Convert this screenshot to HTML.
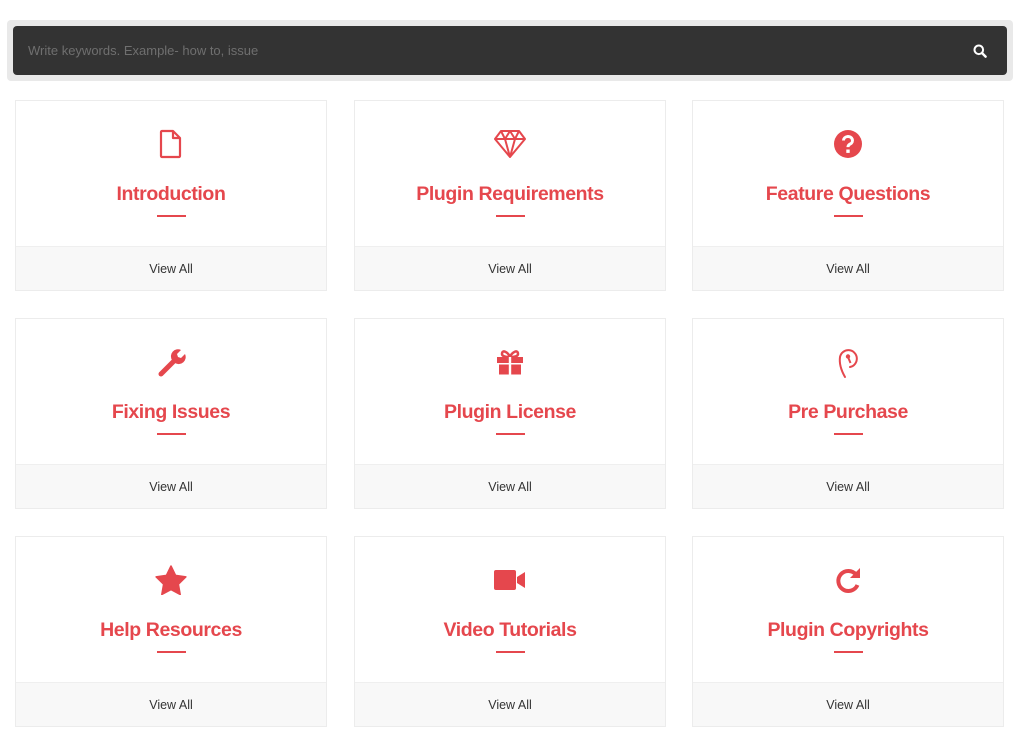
<!DOCTYPE html>
<html><head><meta charset="utf-8"><style>
*{margin:0;padding:0;box-sizing:border-box}
body{width:1024px;height:750px;background:#fff;font-family:"Liberation Sans",sans-serif;position:relative;overflow:hidden}
.sw{position:absolute;left:7px;top:20px;width:1006px;height:61px;background:#e9e9e9;border-radius:4px}
.sb{position:absolute;left:13px;top:26px;width:994px;height:49px;background:#333;border-radius:4px}
.sb span{position:absolute;left:15px;top:17px;font-size:13px;color:#6f6f6f}
.sb svg{position:absolute;right:20px;top:18px}
.c{position:absolute;width:312px;height:191px;border:1px solid #ececec;background:#fff}
.ic{position:absolute;left:0;right:0;top:26px;height:34px;display:flex;justify-content:center;align-items:center}
.t{position:absolute;left:0;right:0;top:82px;text-align:center;font-size:19.5px;font-weight:bold;color:#e5474d;letter-spacing:-0.4px}
.u{position:absolute;left:141px;top:114px;width:29px;height:2px;background:#e5474d}
.f{position:absolute;left:0;right:0;bottom:0;height:44px;background:#f8f8f8;border-top:1px solid #efefef;text-align:center;line-height:45px;font-size:12.5px;color:#333}
</style></head><body>
<div class="sw"></div>
<div class="sb"><span>Write keywords. Example- how to, issue</span>
<svg width="14" height="14" viewBox="0 0 14 14"><circle cx="5.8" cy="5.8" r="4.3" fill="none" stroke="#fff" stroke-width="2"/><path d="M9 9l3.6 3.6" stroke="#fff" stroke-width="2.4" stroke-linecap="round"/></svg></div>

<div class="c" style="left:15px;top:100px"><div class="ic"><svg width="24" height="30" viewBox="0 0 24 30"><path d="M3 2h11l7 7v18a1 1 0 0 1-1 1H3a1 1 0 0 1-1-1V3a1 1 0 0 1 1-1z M14 2v7h7" fill="none" stroke="#e5474d" stroke-width="2.2" stroke-linejoin="round"/></svg></div><div class="t">Introduction</div><div class="u"></div><div class="f">View All</div></div>

<div class="c" style="left:354px;top:100px"><div class="ic"><svg width="34" height="30" viewBox="0 0 34 30"><path d="M8 2h18l6 8-15 18L2 10z M2 10h30 M8 2l4 8 5 18 5-18 4-8 M12 10l5-8 5 8" fill="none" stroke="#e5474d" stroke-width="2" stroke-linejoin="round"/></svg></div><div class="t">Plugin Requirements</div><div class="u"></div><div class="f">View All</div></div>

<div class="c" style="left:692px;top:100px"><div class="ic"><svg width="30" height="30" viewBox="0 0 30 30"><circle cx="15" cy="15" r="14" fill="#e5474d"/><path d="M10.5 11.5a4.5 4 0 1 1 6.5 3.6c-1.4.8-2 1.4-2 3" fill="none" stroke="#fff" stroke-width="3"/><rect x="13.3" y="20.5" width="3.4" height="3.4" fill="#fff"/></svg></div><div class="t">Feature Questions</div><div class="u"></div><div class="f">View All</div></div>

<div class="c" style="left:15px;top:318px"><div class="ic"><svg width="30" height="30" viewBox="0 0 30 30"><path d="M5 27l13-13" stroke="#e5474d" stroke-width="5" stroke-linecap="round"/><path d="M16 13a7 7 0 0 1 9-10l-4 4 1 3 3 1 4-4a7 7 0 0 1-10 9z" fill="#e5474d"/></svg></div><div class="t">Fixing Issues</div><div class="u"></div><div class="f">View All</div></div>

<div class="c" style="left:354px;top:318px"><div class="ic"><svg width="30" height="28" viewBox="0 0 30 28"><path d="M15 9c-2-5-8-8-8-3 0 2 3 3 8 3 5 0 8-1 8-3 0-5-6-2-8 3" fill="none" stroke="#e5474d" stroke-width="2.5"/><rect x="2" y="9" width="26" height="6" fill="#e5474d"/><rect x="4" y="16.5" width="22" height="10" fill="#e5474d"/><rect x="13.8" y="9" width="2.4" height="18" fill="#fff"/></svg></div><div class="t">Plugin License</div><div class="u"></div><div class="f">View All</div></div>

<div class="c" style="left:692px;top:318px"><div class="ic"><svg width="24" height="34" viewBox="0 0 24 34"><path d="M9 32C5 25 3 19 4 12a8.5 8.5 0 1 1 10 10" fill="none" stroke="#e5474d" stroke-width="2" stroke-linecap="round"/><path d="M12 12l2.5 6" stroke="#e5474d" stroke-width="2"/><circle cx="12" cy="11.5" r="2.2" fill="#e5474d"/></svg></div><div class="t">Pre Purchase</div><div class="u"></div><div class="f">View All</div></div>

<div class="c" style="left:15px;top:536px"><div class="ic"><svg width="32" height="30" viewBox="0 0 32 30"><path d="M16 1l4.6 9.4 10.3 1.5-7.5 7.3 1.8 10.3L16 24.6l-9.2 4.9 1.8-10.3-7.5-7.3 10.3-1.5z" fill="#e5474d" stroke="#e5474d" stroke-width="1.5" stroke-linejoin="round"/></svg></div><div class="t">Help Resources</div><div class="u"></div><div class="f">View All</div></div>

<div class="c" style="left:354px;top:536px"><div class="ic"><svg width="34" height="24" viewBox="0 0 34 24"><rect x="1" y="2" width="22" height="20" rx="2" fill="#e5474d"/><path d="M24 9l8-5v16l-8-5z" fill="#e5474d"/></svg></div><div class="t">Video Tutorials</div><div class="u"></div><div class="f">View All</div></div>

<div class="c" style="left:692px;top:536px"><div class="ic"><svg width="30" height="30" viewBox="0 0 30 30"><path d="M23 9.5A10 10 0 1 0 24.5 20" fill="none" stroke="#e5474d" stroke-width="4"/><path d="M27 3v10H17z" fill="#e5474d"/></svg></div><div class="t">Plugin Copyrights</div><div class="u"></div><div class="f">View All</div></div>
</body></html>
